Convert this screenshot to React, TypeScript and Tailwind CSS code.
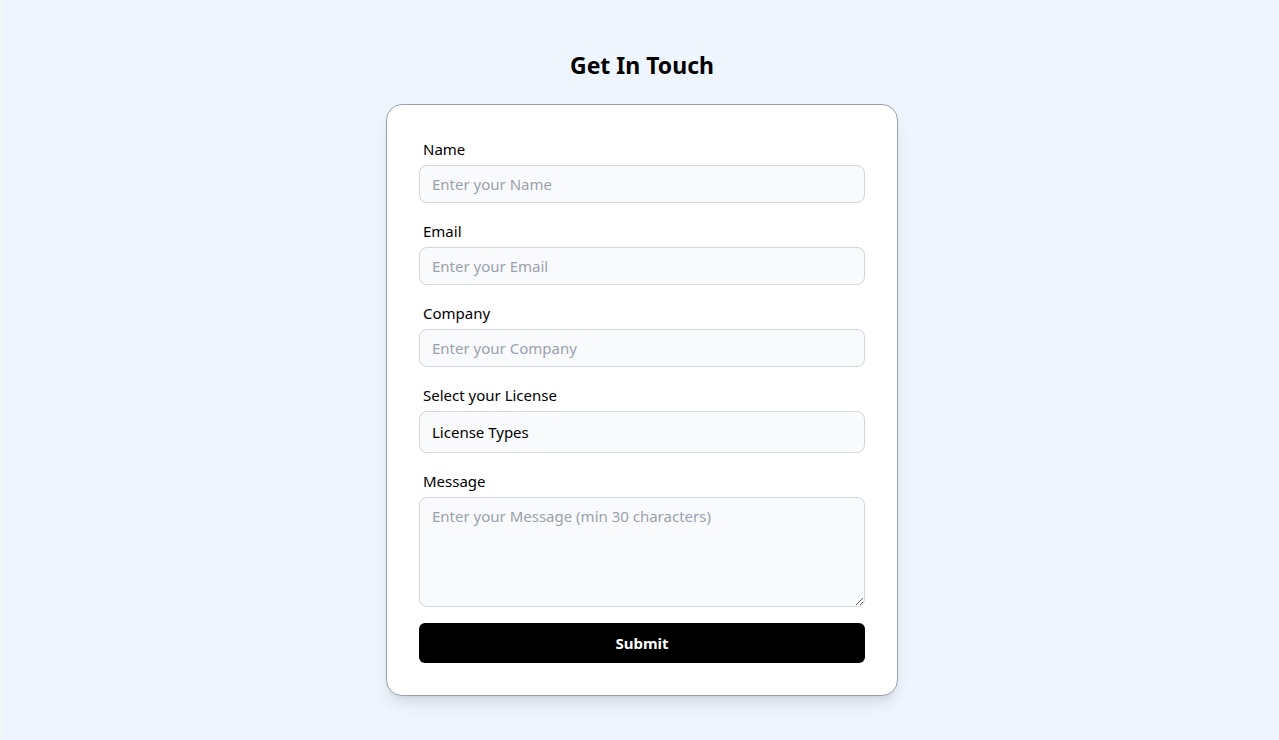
import React, { useState } from "react";

const fields = [
  { id: "name", label: "Name", placeholder: "Enter your Name" },
  { id: "email", label: "Email", placeholder: "Enter your Email" },
  { id: "company", label: "Company", placeholder: "Enter your Company" },
];

const App = () => {
  const [license, setLicense] = useState("");

  return (
    <div
      className="min-h-[740px] w-full bg-[#eef5fd] border-l-2 border-[#f4f7fa] flex flex-col items-center pt-[49px] pl-[3px] pb-10 text-black"
      style={{ fontFamily: '"Noto Sans", "Open Sans", sans-serif' }}
    >
      <h1 className="text-[23px] font-bold leading-8 mb-[23px]">Get In Touch</h1>
      <form
        className="w-[512px] bg-white border border-gray-400 rounded-2xl shadow-lg px-8 pt-8 pb-8 flex flex-col gap-4"
        onSubmit={(e) => e.preventDefault()}
      >
        {fields.map((f) => (
          <div key={f.id} className="flex flex-col gap-1">
            <label htmlFor={f.id} className="px-1 text-[15px] leading-6">
              {f.label}
            </label>
            <input
              id={f.id}
              placeholder={f.placeholder}
              className="h-[38px] w-full rounded-lg border border-gray-300 bg-gray-50 px-3 text-[15px] text-black placeholder:text-gray-400 outline-none"
            />
          </div>
        ))}
        <div className="flex flex-col gap-1">
          <label htmlFor="license" className="px-1 text-[15px] leading-6">
            Select your License
          </label>
          <select
            id="license"
            value={license}
            onChange={(e) => setLicense(e.target.value)}
            className="h-[42px] w-full appearance-none rounded-lg border border-gray-300 bg-gray-50 px-3 text-[15px] text-black outline-none"
          >
            <option value="">License Types</option>
            <option value="personal">Personal</option>
            <option value="commercial">Commercial</option>
          </select>
        </div>
        <div className="flex flex-col gap-1">
          <label htmlFor="message" className="px-1 text-[15px] leading-6">
            Message
          </label>
          <textarea
            id="message"
            placeholder="Enter your Message (min 30 characters)"
            className="h-[110px] w-full rounded-lg border border-gray-300 bg-gray-50 px-3 py-2 text-[15px] leading-5 text-black placeholder:text-gray-400 outline-none"
          />
        </div>
        <button
          type="submit"
          className="h-10 w-full rounded-md bg-black text-white text-[15px] font-bold"
        >
          Submit
        </button>
      </form>
    </div>
  );
};

export default App;
